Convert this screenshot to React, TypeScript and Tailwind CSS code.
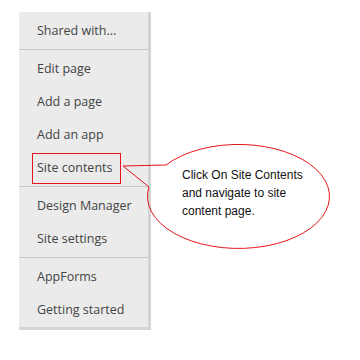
import React from 'react';

const sections: { label: string; boxed?: boolean }[][] = [
  [{ label: 'Shared with...' }],
  [{ label: 'Edit page' }, { label: 'Add a page' }, { label: 'Add an app' }, { label: 'Site contents', boxed: true }],
  [{ label: 'Design Manager' }, { label: 'Site settings' }],
  [{ label: 'AppForms' }, { label: 'Getting started' }],
];

function Callout() {
  return (
    <div className="absolute inset-0 pointer-events-none">
      <svg width="360" height="360" className="absolute left-0 top-0">
        <path
          d="M 166 165 L 123 166 L 149 187 A 91 52 0 1 0 166 165"
          fill="none"
          stroke="#e3141b"
          strokeWidth="1"
        />
      </svg>
      <div className="absolute left-[182px] top-[166px] text-[12px] leading-[18px] text-[#111] [font-family:'Liberation_Sans',Arial,sans-serif]">
        <div>Click On Site Contents</div>
        <div>and navigate to site</div>
        <div>content page.</div>
      </div>
    </div>
  );
}

export default function App() {
  return (
    <div className="relative w-[360px] h-[360px] bg-white overflow-hidden">
      <div className="pl-[19px] pt-[12px]">
        <div className="w-[132px] bg-[#ebebeb] border-r-[3px] border-b-[3px] border-[#d4d4d4] [font-family:'Open_Sans',sans-serif] text-[12.5px] text-[#444]">
          {sections.map((items, i) => (
            <div
              key={i}
              className={
                i < sections.length - 1
                  ? 'pt-[3px] pb-[1px] border-b border-[#c8c8c8]'
                  : 'pt-[3px]'
              }
            >
              {items.map((it) => (
                <div key={it.label} className="h-[33px] flex items-center pl-[18px]">
                  {it.boxed ? (
                    <span className="-ml-[5px] h-[31px] flex items-center border border-[#e3141b] pl-[4px] pr-[8px]">
                      {it.label}
                    </span>
                  ) : (
                    it.label
                  )}
                </div>
              ))}
            </div>
          ))}
        </div>
      </div>
      <Callout />
    </div>
  );
}
